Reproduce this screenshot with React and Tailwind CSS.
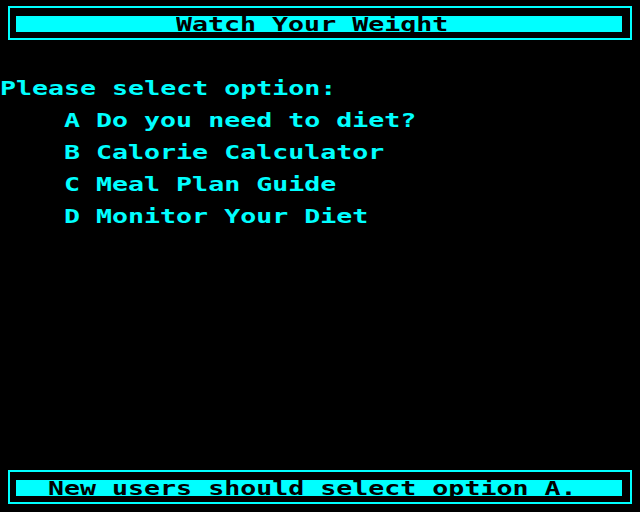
export default function App() {
  const txt =
    "block origin-left scale-x-[1.4] whitespace-pre font-bold text-[19px] leading-[16px] [font-family:'DejaVu_Sans_Mono',monospace]";
  const Bar = ({ children, pad, className }) => (
    <div className={"mx-[8px] h-[34px] border-2 border-[#00ffff] pt-[8px] pr-[8px] pb-[6px] pl-[6px] " + className}>
      <div className={"h-[16px] bg-[#00ffff] text-black " + pad}>
        <span className={txt}>{children}</span>
      </div>
    </div>
  );
  const items = [
    "A Do you need to diet?",
    "B Calorie Calculator",
    "C Meal Plan Guide",
    "D Monitor Your Diet",
  ];
  return (
    <div className="w-[640px] h-[512px] bg-black flex flex-col overflow-hidden">
      <Bar pad="pl-[160px]" className="mt-[6px]">Watch Your Weight</Bar>
      <div className="mt-[40px] flex flex-col gap-[16px] text-[#00ffff]">
        <div className="h-[16px]">
          <span className={txt}>Please select option:</span>
        </div>
        {items.map((t) => (
          <div key={t} className="h-[16px] pl-[64px]">
            <span className={txt}>{t}</span>
          </div>
        ))}
      </div>
      <div className="flex-1" />
      <Bar pad="pl-[32px]" className="mb-[8px]">New users should select option A.</Bar>
    </div>
  );
}
